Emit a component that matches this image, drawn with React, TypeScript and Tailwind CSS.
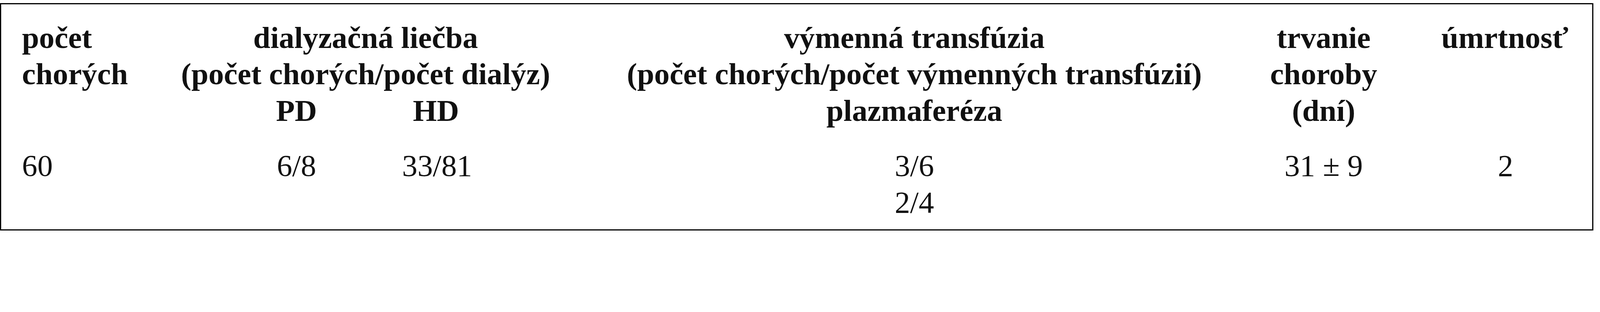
import React from "react";

// one text line; centred lines may be wider than their cell, so centre with flex
const Line: React.FC<{ children: React.ReactNode; left?: boolean }> = ({ children, left }) => (
  <div className={left ? "whitespace-nowrap" : "flex justify-center whitespace-nowrap"}>{children}</div>
);

export default function App() {
  return (
    <div className="h-[600px] overflow-hidden bg-white pt-[7.5px] font-['Liberation_Serif','Times_New_Roman',serif] text-[78.75px] leading-[93.75px] text-[#111]">
      <div className="w-[4078.5px] border-[3.75px] border-black pt-[39px] pb-[22.5px]">
        <div className="grid grid-cols-[579px_354px_354px_209.25px_1683px_412.5px_479.25px] grid-rows-[187.5px_93.75px_auto]">
          {/* header */}
          <div className="col-start-1 row-start-1 pl-[53.25px] font-bold">
            <Line left>počet</Line>
            <Line left>chorých</Line>
          </div>
          <div className="col-start-2 col-span-2 row-start-1 font-bold">
            <Line>dialyzačná liečba</Line>
            <Line>(počet chorých/počet dialýz)</Line>
          </div>
          <div className="col-start-2 row-start-2 font-bold">
            <Line>PD</Line>
          </div>
          <div className="col-start-3 row-start-2 pl-[6px] font-bold">
            <Line>HD</Line>
          </div>
          <div className="col-start-5 row-start-1 row-span-2 font-bold">
            <Line>výmenná transfúzia</Line>
            <Line>(počet chorých/počet výmenných transfúzií)</Line>
            <Line>plazmaferéza</Line>
          </div>
          <div className="col-start-6 row-start-1 row-span-2 font-bold">
            <Line>trvanie</Line>
            <Line>choroby</Line>
            <Line>(dní)</Line>
          </div>
          <div className="col-start-7 row-start-1 row-span-2 pl-[36px] font-bold">
            <Line>úmrtnosť</Line>
          </div>

          {/* data */}
          <div className="col-start-1 row-start-3 pt-[47.25px] pl-[53.25px]">
            <Line left>60</Line>
          </div>
          <div className="col-start-2 row-start-3 pt-[47.25px]">
            <Line>6/8</Line>
          </div>
          <div className="col-start-3 row-start-3 pt-[47.25px] pl-[12px]">
            <Line>33/81</Line>
          </div>
          <div className="col-start-5 row-start-3 pt-[47.25px]">
            <Line>3/6</Line>
            <Line>2/4</Line>
          </div>
          <div className="col-start-6 row-start-3 pt-[47.25px]">
            <Line>31 ± 9</Line>
          </div>
          <div className="col-start-7 row-start-3 pt-[47.25px] pl-[39.75px]">
            <Line>2</Line>
          </div>
        </div>
      </div>
    </div>
  );
}
